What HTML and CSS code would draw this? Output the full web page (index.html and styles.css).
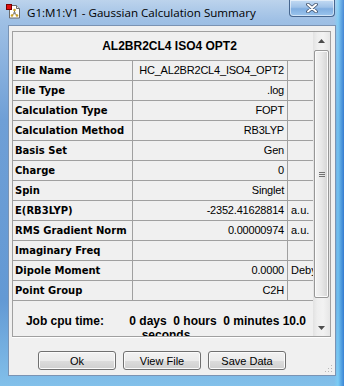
FILE: index.html
```html
<!DOCTYPE html>
<html lang="en">
<head>
  <meta charset="UTF-8">
  <title>G1:M1:V1 - Gaussian Calculation Summary</title>
  <link rel="stylesheet" href="styles.css">
</head>
<body>
  <div class="window">
    <div class="titlebar">
      <svg class="app-icon" viewBox="0 0 15 15" width="15" height="15">
        <path d="M3.5 1.5h7l3 3v9.5h-10z" fill="#fff" stroke="#6b6b6b"/>
        <path d="M10.5 1.5v3h3" fill="#e8e8e8" stroke="#6b6b6b"/>
        <line x1="8.5" y1="6" x2="8.5" y2="9" stroke="#7a6a40"/>
        <line x1="8.5" y1="9" x2="6" y2="11.5" stroke="#7a6a40"/>
        <line x1="8.5" y1="9" x2="11" y2="11.5" stroke="#7a6a40"/>
        <circle cx="8.5" cy="6" r="1.3" fill="#c9a227"/>
        <circle cx="8.5" cy="9" r="1.2" fill="#8a8a8a"/>
        <circle cx="6" cy="11.5" r="1.3" fill="#c9a227"/>
        <circle cx="11" cy="11.5" r="1.3" fill="#c9a227"/>
        <rect x="0.5" y="0.5" width="5" height="5" fill="#e01010" stroke="#7a0000"/>
      </svg>
      <span class="title">G1:M1:V1 - Gaussian Calculation Summary</span>
      <button class="close" type="button">
        <svg viewBox="0 0 12 10" width="12" height="10">
          <path d="M2 1.5l8 7M10 1.5l-8 7" stroke="#3d4d66" stroke-width="3.6" stroke-linecap="round"/>
          <path d="M2 1.5l8 7M10 1.5l-8 7" stroke="#fff" stroke-width="2" stroke-linecap="round"/>
        </svg>
      </button>
    </div>

    <div class="client">
      <div class="panel">
        <div class="content">
          <div class="summary">
            <div class="head">AL2BR2CL4 ISO4 OPT2</div>

            <div class="label">File Name</div>
            <div class="value">HC_AL2BR2CL4_ISO4_OPT2</div>
            <div class="unit"></div>

            <div class="label">File Type</div>
            <div class="value">.log</div>
            <div class="unit"></div>

            <div class="label">Calculation Type</div>
            <div class="value">FOPT</div>
            <div class="unit"></div>

            <div class="label">Calculation Method</div>
            <div class="value">RB3LYP</div>
            <div class="unit"></div>

            <div class="label">Basis Set</div>
            <div class="value">Gen</div>
            <div class="unit"></div>

            <div class="label">Charge</div>
            <div class="value">0</div>
            <div class="unit"></div>

            <div class="label">Spin</div>
            <div class="value">Singlet</div>
            <div class="unit"></div>

            <div class="label">E(RB3LYP)</div>
            <div class="value">-2352.41628814</div>
            <div class="unit">a.u.</div>

            <div class="label">RMS Gradient Norm</div>
            <div class="value">0.00000974</div>
            <div class="unit">a.u.</div>

            <div class="label">Imaginary Freq</div>
            <div class="value"></div>
            <div class="unit"></div>

            <div class="label">Dipole Moment</div>
            <div class="value">0.0000</div>
            <div class="unit">Debye</div>

            <div class="label">Point Group</div>
            <div class="value">C2H</div>
            <div class="unit"></div>
          </div>

          <p class="cpu"><b class="cpu-label">Job cpu time:</b> <b>0 days&nbsp; 0 hours&nbsp; 0 minutes 10.0 seconds</b></p>
        </div>

        <div class="scrollbar">
          <div class="sb-btn">
            <svg viewBox="0 0 7 4" width="7" height="4"><path d="M0 4L3.5 0 7 4z" fill="#4d4d4d"/></svg>
          </div>
          <div class="sb-track">
            <div class="sb-thumb"><span class="sb-grip"></span></div>
          </div>
          <div class="sb-btn">
            <svg viewBox="0 0 7 4" width="7" height="4"><path d="M0 0L3.5 4 7 0z" fill="#4d4d4d"/></svg>
          </div>
        </div>
      </div>

      <div class="buttons">
        <button class="btn" type="button">Ok</button>
        <button class="btn" type="button">View File</button>
        <button class="btn" type="button">Save Data</button>
      </div>

      <div class="resize-grip"></div>
    </div>
  </div>
</body>
</html>
```

FILE: styles.css
```css
/* General Reset */
* {
  margin: 0;
  padding: 0;
  box-sizing: border-box;
}

body {
  width: 344px;
  height: 386px;
  overflow: hidden;
  font-family: 'Liberation Sans', Arial, sans-serif;
  color: #000;
}

/* Aero window frame */
.window {
  height: 386px;
  display: flex;
  flex-direction: column;
  background:
    linear-gradient(90deg, rgba(255, 255, 255, 0) 0, rgba(255, 255, 255, 0) 334px, rgba(120, 210, 250, 0.7) 338px, rgba(30, 110, 205, 0.7) 344px),
    linear-gradient(180deg, #bcd3ec 0, #9fc0e5 20px, #6f9fd6 120px, #6399d4 300px, #82c0ea 386px);
}

.titlebar {
  height: 25px;
  display: flex;
  align-items: flex-start;
  padding-left: 6px;
}

.app-icon {
  margin-top: 4px;
  flex-shrink: 0;
}

.title {
  margin-left: 6px;
  margin-top: 5px;
  font-family: 'Open Sans', 'Noto Sans', sans-serif;
  font-size: 11.6px;
  line-height: 16px;
  color: #000;
  white-space: nowrap;
}

.close {
  margin-left: auto;
  margin-right: 9px;
  width: 46px;
  height: 17px;
  border: 1px solid #46668f;
  border-top: none;
  border-radius: 0 0 4px 4px;
  background: linear-gradient(180deg, #c4dbf3 0, #9fc2e8 45%, #80aee0 55%, #9bc5ee 100%);
  box-shadow: inset 0 0 0 1px rgba(255, 255, 255, 0.55);
  display: flex;
  align-items: center;
  justify-content: center;
}

/* client area */
.client {
  flex: 1;
  margin: 0 8px 10px 8px;
  background: #f0f0f0;
  border: 1px solid #7a93b3;
  position: relative;
  display: flex;
  flex-direction: column;
}

.panel {
  margin: 5px 0 0 3px;
  width: 319px;
  height: 306px;
  border: 1px solid #a0a0a0;
  display: flex;
  box-shadow: 0 1px 0 #fff;
}

.content {
  width: 300px;
  overflow: hidden;
}

.summary {
  display: grid;
  grid-template-columns: 120px 155px 25px;
  grid-template-rows: 29px;
  grid-auto-rows: 20px;
}

.summary div {
  border-bottom: 1px solid #a0a0a0;
  line-height: 19px;
  white-space: nowrap;
  overflow: hidden;
}

.summary .head {
  grid-column: 1 / 4;
  line-height: 28px;
  padding-left: 13px;
  text-align: center;
  font-weight: bold;
  font-size: 12px;
}

.summary .label {
  border-right: 1px solid #a0a0a0;
  padding-left: 2px;
  font-family: 'DejaVu Sans', sans-serif;
  font-weight: bold;
  font-size: 10px;
}

.summary .value {
  border-right: 1px solid #a0a0a0;
  padding-right: 3px;
  text-align: right;
  font-size: 11px;
  letter-spacing: -0.2px;
}

.summary .unit {
  padding-left: 3px;
  font-size: 11px;
}

.cpu {
  margin-top: 13px;
  padding-left: 6px;
  text-align: center;
  font-size: 12px;
  line-height: 14px;
}

.cpu-label {
  margin-right: 22px;
}

/* scrollbar */
.scrollbar {
  width: 17px;
  display: flex;
  flex-direction: column;
  background: linear-gradient(90deg, #e2e2e2 0, #eeeeee 25%, #f2f2f2 60%, #e6e6e6 100%);
}

.sb-btn {
  height: 17px;
  display: flex;
  align-items: center;
  justify-content: center;
}

.sb-track {
  flex: 1;
  padding: 1px 0 20px 0;
}

.sb-thumb {
  height: 248px;
  margin: 0 1px;
  border: 1px solid #979797;
  border-radius: 2px;
  background: linear-gradient(90deg, #f4f4f4 0, #e8e8e8 50%, #d4d4d4 100%);
  box-shadow: inset 0 0 0 1px #fbfbfb;
  display: flex;
  align-items: center;
  justify-content: center;
}

.sb-grip {
  width: 6px;
  height: 5px;
  background: repeating-linear-gradient(180deg, #727272 0, #727272 1px, transparent 1px, transparent 2px);
}

/* dialog buttons */
.buttons {
  display: flex;
  gap: 7px;
  margin: 14px 0 0 29px;
}

.btn {
  width: 78px;
  height: 19px;
  border: 1px solid #707070;
  border-radius: 3px;
  background: linear-gradient(180deg, #f2f2f2 0, #ebebeb 50%, #dddddd 50%, #cfcfcf 100%);
  box-shadow: inset 0 0 0 1px #fbfbfb;
  font-family: 'Liberation Sans', Arial, sans-serif;
  font-size: 11px;
  color: #000;
}

.resize-grip {
  position: absolute;
  right: 3px;
  bottom: 3px;
  width: 8px;
  height: 8px;
  background:
    radial-gradient(circle, #b8b8b8 0.8px, transparent 1px) 0 0 / 3px 3px;
  clip-path: polygon(100% 0, 100% 100%, 0 100%);
}
```
